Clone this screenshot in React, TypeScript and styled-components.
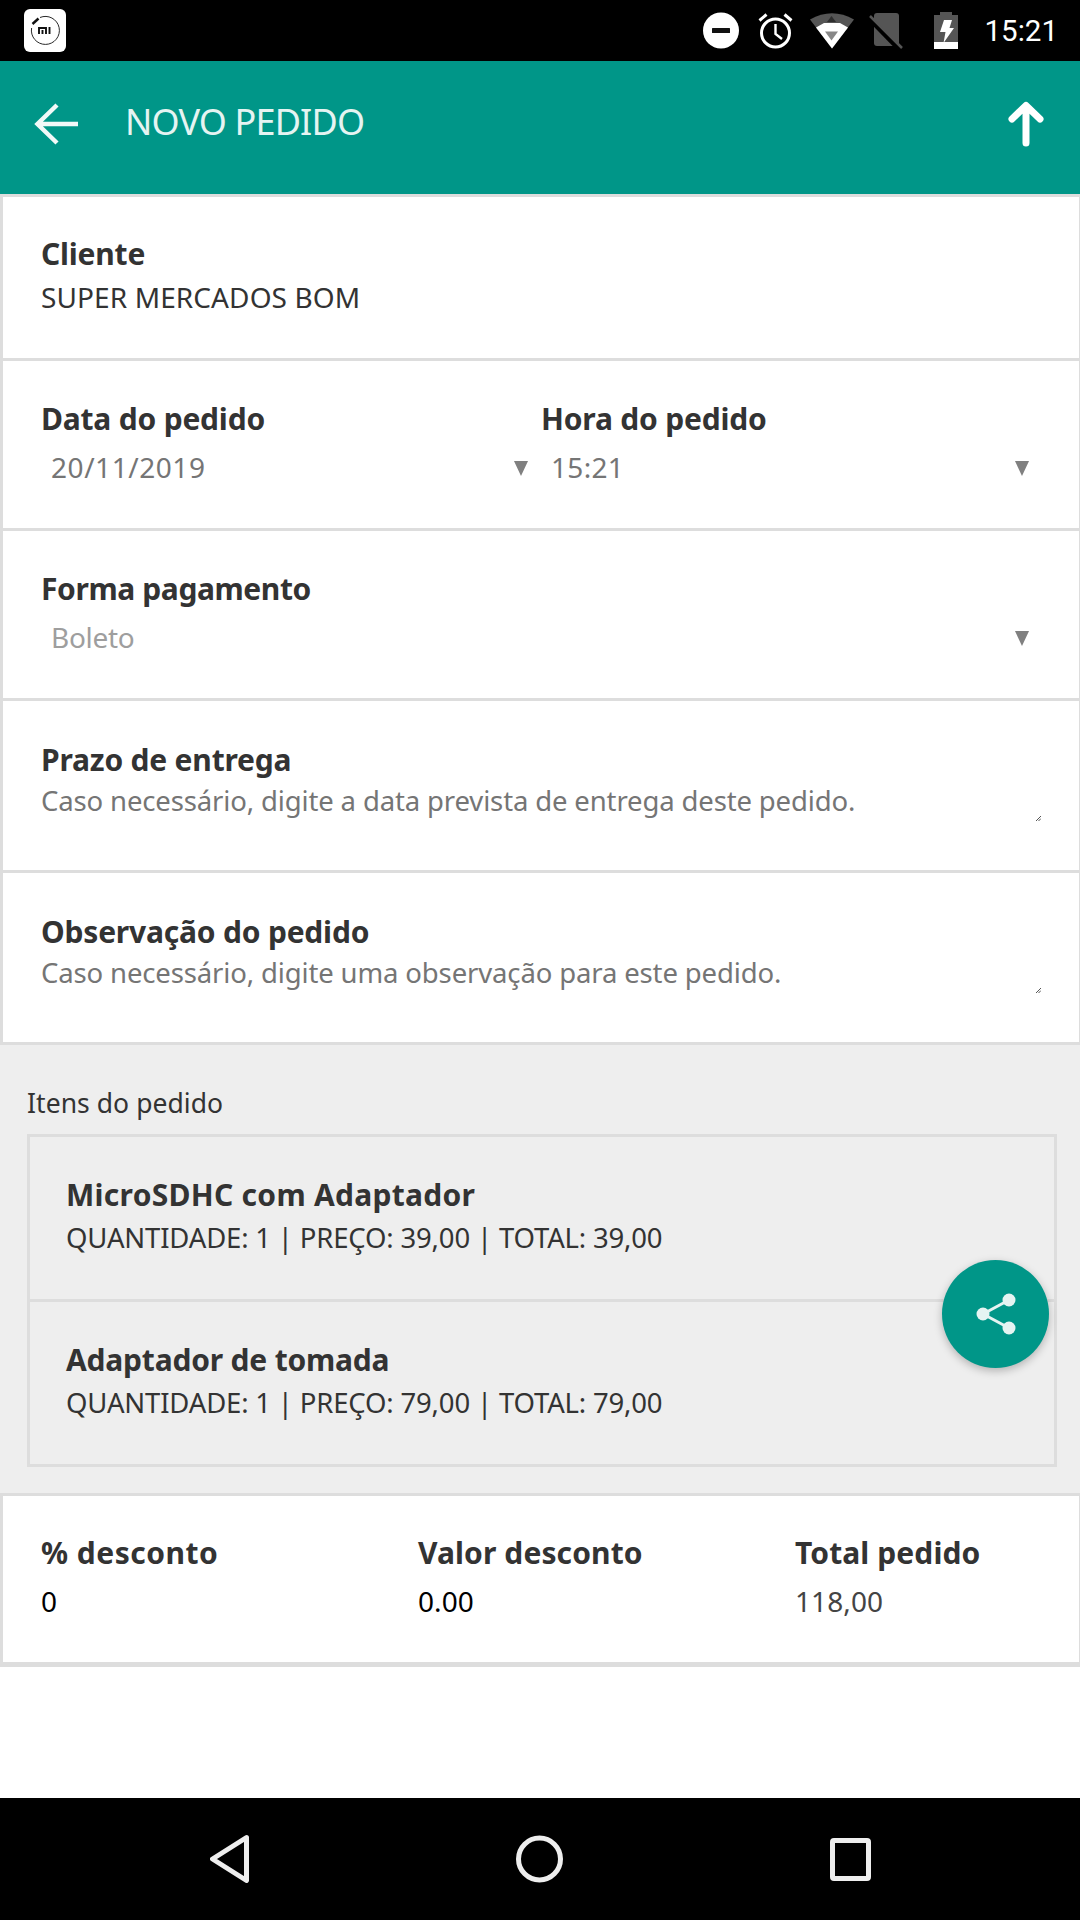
import React from "react";
import styled, { createGlobalStyle } from "styled-components";

const Global = createGlobalStyle`
  html, body { margin: 0; padding: 0; background: #fff; }
  #root { width: 1080px; height: 1920px; }
  * { box-sizing: border-box; }
`;

const Screen = styled.div`
  position: relative;
  width: 1080px;
  height: 1920px;
  display: flex;
  flex-direction: column;
  background: #fff;
  overflow: hidden;
  font-family: "Noto Sans", "Open Sans", sans-serif;
  color: #333;
`;

const StatusBar = styled.div`
  height: 61px;
  flex: none;
  background: #000;
  display: flex;
  align-items: center;
  padding: 0 22px 0 24px;
`;

const StatusIcons = styled.div`
  margin-left: auto;
  display: flex;
  align-items: center;
`;

const StatusIcon = styled.svg<{ $gap?: number }>`
  flex: none;
  margin-left: ${(p) => p.$gap ?? 0}px;
`;

const Clock = styled.span`
  font-family: Roboto, sans-serif;
  font-size: 29.5px;
  color: #fff;
  margin-left: 27px;
`;

const Header = styled.header`
  height: 133px;
  flex: none;
  background: #009688;
  display: flex;
  align-items: center;
  padding: 0 36px 8px 34px;
`;

const Title = styled.h1`
  margin: 0 0 5px 47px;
  font-size: 36px;
  font-weight: 400;
  color: #e5f4f2;
  letter-spacing: -0.85px;
`;

const UpButton = styled.div`
  margin-left: auto;
  display: flex;
`;

const Section = styled.section<{ $h: number }>`
  height: ${(p) => p.$h}px;
  flex: none;
  background: #fff;
  border-left: 3px solid #ddd;
  border-right: 1px solid #ddd;
  border-bottom: 3px solid #ddd;
  padding: 0 0 0 38px;
`;

const TopRule = styled.div`
  height: 3px;
  flex: none;
  background: #ddd;
`;

const Label = styled.div<{ $track?: number }>`
  font-size: 30px;
  font-weight: 700;
  line-height: 36px;
  color: #333;
  letter-spacing: ${(p) => p.$track ?? -0.2}px;
`;

const ClientBlock = styled.div`
  padding-top: 39px;
`;

const ClientValue = styled.div`
  font-size: 28px;
  line-height: 36px;
  margin-top: 7px;
  color: #333;
  letter-spacing: 0.1px;
`;

const Columns = styled.div`
  display: grid;
  grid-template-columns: 500px 1fr;
  padding-top: 40px;
`;

const SelectValue = styled.div<{ $tone: string; $track: number }>`
  display: flex;
  align-items: center;
  justify-content: space-between;
  margin-top: 12px;
  padding: 0 0 0 10px;
  height: 36px;
  font-size: 28px;
  color: ${(p) => p.$tone};
  letter-spacing: ${(p) => p.$track}px;
`;

const Caret = styled.span`
  width: 0;
  height: 0;
  border-left: 7.5px solid transparent;
  border-right: 7.5px solid transparent;
  border-top: 15px solid #808080;
  margin-top: 3px;
  margin-right: 50px;
`;

const DateCaret = styled(Caret)`
  margin-right: 13px;
`;

const PayBlock = styled.div`
  padding-top: 40px;
`;

const TextBlock = styled.div`
  position: relative;
  height: 100%;
  padding-top: 41px;
`;

const Hint = styled.div`
  font-size: 27.5px;
  line-height: 36px;
  margin-top: 5px;
  color: #757575;
  letter-spacing: -0.14px;
`;

const Grip = styled.svg`
  position: absolute;
  right: 38px;
  bottom: 49px;
`;

const ItemsArea = styled.div`
  position: relative;
  height: 448px;
  flex: none;
  background: #eee;
  padding: 40px 23px 0 27px;
`;

const ItemsTitle = styled.div`
  font-size: 26.5px;
  line-height: 36px;
  color: #333;
  letter-spacing: 0.05px;
`;

const ItemsBox = styled.div`
  margin-top: 13px;
  border: 3px solid #ddd;
  height: 333px;
`;

const Item = styled.div`
  height: 165px;
  padding: 40px 0 0 36px;
  border-bottom: 3px solid #ddd;
  &:last-child { border-bottom: none; }
`;

const ItemDetail = styled.div`
  font-size: 27.5px;
  line-height: 36px;
  margin-top: 7px;
  color: #333;
  letter-spacing: -0.17px;
`;

const Fab = styled.div`
  position: absolute;
  left: 942px;
  top: 215px;
  width: 107px;
  height: 108px;
  border-radius: 50%;
  background: #009688;
  box-shadow: 0 3px 8px rgba(0, 0, 0, 0.25);
  display: flex;
  align-items: center;
  justify-content: center;
`;

const Totals = styled.div`
  display: grid;
  grid-template-columns: 377px 377px 1fr;
  padding-top: 39px;
`;

const TotalsSection = styled(Section)`
  border-top: 3px solid #ddd;
  border-bottom-width: 5px;
`;

const TotalValue = styled.div<{ $tone: string }>`
  font-size: 28px;
  line-height: 36px;
  margin-top: 12px;
  color: ${(p) => p.$tone};
  letter-spacing: 0.1px;
`;

const Spacer = styled.div`
  flex: 1;
`;

const NavBar = styled.nav`
  height: 122px;
  flex: none;
  background: #000;
  display: flex;
  align-items: center;
  justify-content: space-between;
  padding: 0 209px 0 210px;
`;

const GripMark = () => (
  <Grip width="5" height="5" viewBox="0 0 5 5">
    <path d="M0 5 L5 0 M2.500 5 L5 2.500" stroke="#555" strokeWidth="1" />
  </Grip>
);

export default function App() {
  return (
    <Screen>
      <Global />
      <StatusBar>
        <svg width="42" height="43" viewBox="0 0 42 43">
          <rect x="0" y="0" width="42" height="43" rx="6" fill="#fff" />
          <path d="M16 8.500 A14 14 0 1 1 7.600 19" fill="none" stroke="#111" strokeWidth="0.9" />
          <path d="M8.500 15 L14.500 9.500" stroke="#111" strokeWidth="2.400" />
          <path d="M15 25 V19 H22 V25 M18.500 25 V21 M25.500 18 V25" fill="none" stroke="#111" strokeWidth="1.900" />
        </svg>
        <StatusIcons>
          <StatusIcon width="36" height="37" viewBox="0 0 36 37">
            <circle cx="18" cy="18.500" r="18" fill="#fff" />
            <rect x="9" y="16" width="18" height="5" rx="0.500" fill="#111" />
          </StatusIcon>
          <StatusIcon $gap={19} width="35" height="37" viewBox="0 0 35 37">
            <circle cx="17.500" cy="21" r="14" fill="none" stroke="#fff" strokeWidth="3" />
            <path d="M17.500 12 V22 L24 27" fill="none" stroke="#fff" strokeWidth="2.400" />
            <path d="M1.500 8.500 L8.500 2.500 M33.500 8.500 L26.500 2.500" stroke="#fff" strokeWidth="3" />
          </StatusIcon>
          <StatusIcon $gap={17} width="44" height="36" viewBox="0 0 44 36">
            <path d="M0 6.500 Q22 -6 44 6.500 L22 35.500 Z" fill="#555" />
            <path d="M6 14.500 L14 10 H30 L38 14.500 L22 35.500 Z" fill="#fff" />
            <path d="M21.500 3 L26 9 H17 Z" fill="#2e2e2e" />
            <path d="M15 18.500 H28 L21.500 27.500 Z" fill="#888" />
          </StatusIcon>
          <StatusIcon $gap={15} width="34" height="36" viewBox="0 0 34 36">
            <path d="M5 3 a3 3 0 0 1 3-3 H27 a3 3 0 0 1 3 3 V30 a3 3 0 0 1-3 3 H8 a3 3 0 0 1-3-3 Z" fill="#555" />
            <path d="M-2 3 L31 37" stroke="#000" strokeWidth="5" />
            <path d="M1 3 L33 35" stroke="#555" strokeWidth="2.500" />
          </StatusIcon>
          <StatusIcon $gap={31} width="24" height="37" viewBox="0 0 24 37">
            <path d="M6 0 H18 V3 H24 V37 H0 V3 H6 Z" fill="#555" />
            <path d="M0 30 H24 V37 H0 Z" fill="#fff" />
            <path d="M10 8 H18 L15.500 16 H20 L9.500 31 L11.500 20 H6 Z" fill="#fff" />
          </StatusIcon>
          <Clock>15:21</Clock>
        </StatusIcons>
      </StatusBar>

      <Header>
        <svg width="44" height="44" viewBox="0 0 44 44">
          <path d="M44 22 H4 M23 3 L3.500 22 L23 41" fill="none" stroke="#f1f9f8" strokeWidth="4.500" />
        </svg>
        <Title>NOVO PEDIDO</Title>
        <UpButton>
          <svg width="36" height="46" viewBox="0 0 36 46">
            <path d="M18 42 V5 M4 18 L18 4.500 L32 18" fill="none" stroke="#fff" strokeWidth="7" strokeLinecap="round" strokeLinejoin="round" />
          </svg>
        </UpButton>
      </Header>

      <TopRule />

      <Section $h={164}>
        <ClientBlock>
          <Label>Cliente</Label>
          <ClientValue>SUPER MERCADOS BOM</ClientValue>
        </ClientBlock>
      </Section>

      <Section $h={170}>
        <Columns>
          <div>
            <Label>Data do pedido</Label>
            <SelectValue $tone="#757575" $track={0.55}>
              20/11/2019
              <DateCaret />
            </SelectValue>
          </div>
          <div>
            <Label>Hora do pedido</Label>
            <SelectValue $tone="#757575" $track={0.3}>
              15:21
              <Caret />
            </SelectValue>
          </div>
        </Columns>
      </Section>

      <Section $h={170}>
        <PayBlock>
          <Label $track={-0.4}>Forma pagamento</Label>
          <SelectValue $tone="#9e9e9e" $track={-0.3}>
            Boleto
            <Caret />
          </SelectValue>
        </PayBlock>
      </Section>

      <Section $h={172}>
        <TextBlock>
          <Label>Prazo de entrega</Label>
          <Hint>Caso necessário, digite a data prevista de entrega deste pedido.</Hint>
          <GripMark />
        </TextBlock>
      </Section>

      <Section $h={172}>
        <TextBlock>
          <Label>Observação do pedido</Label>
          <Hint>Caso necessário, digite uma observação para este pedido.</Hint>
          <GripMark />
        </TextBlock>
      </Section>

      <ItemsArea>
        <ItemsTitle>Itens do pedido</ItemsTitle>
        <ItemsBox>
          <Item>
            <Label $track={0.28}>MicroSDHC com Adaptador</Label>
            <ItemDetail>QUANTIDADE: 1 | PREÇO: 39,00 | TOTAL: 39,00</ItemDetail>
          </Item>
          <Item>
            <Label>Adaptador de tomada</Label>
            <ItemDetail>QUANTIDADE: 1 | PREÇO: 79,00 | TOTAL: 79,00</ItemDetail>
          </Item>
        </ItemsBox>
        <Fab>
          <svg width="40" height="42" viewBox="0 0 40 42">
            <path d="M7 21 L33 7 M7 21 L33 35" stroke="#e5f4f2" strokeWidth="3" />
            <circle cx="7" cy="21" r="6.500" fill="#e5f4f2" />
            <circle cx="33" cy="7" r="6.500" fill="#e5f4f2" />
            <circle cx="33" cy="35" r="6.500" fill="#e5f4f2" />
          </svg>
        </Fab>
      </ItemsArea>

      <TotalsSection $h={174}>
        <Totals>
          <div>
            <Label $track={0.5}>% desconto</Label>
            <TotalValue $tone="#000">0</TotalValue>
          </div>
          <div>
            <Label $track={0.1}>Valor desconto</Label>
            <TotalValue $tone="#000">0.00</TotalValue>
          </div>
          <div>
            <Label $track={0.1}>Total pedido</Label>
            <TotalValue $tone="#444">118,00</TotalValue>
          </div>
        </Totals>
      </TotalsSection>

      <Spacer />

      <NavBar>
        <svg width="39" height="48" viewBox="0 0 39 48">
          <path d="M36.500 2.500 L2.500 24 L36.500 45.500 Z" fill="none" stroke="#eee" strokeWidth="5" strokeLinejoin="round" />
        </svg>
        <svg width="47" height="48" viewBox="0 0 47 48">
          <circle cx="23.500" cy="24" r="21" fill="none" stroke="#eee" strokeWidth="5" />
        </svg>
        <svg width="41" height="43" viewBox="0 0 41 43">
          <rect x="2.500" y="2.500" width="36" height="38" rx="1.500" fill="none" stroke="#eee" strokeWidth="5" />
        </svg>
      </NavBar>
    </Screen>
  );
}
